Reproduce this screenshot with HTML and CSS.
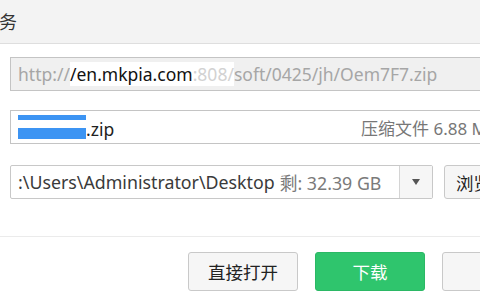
FILE: index.html
```html
<!DOCTYPE html>
<html>
<head>
<meta charset="utf-8">
<link rel="stylesheet" href="styles.css">
</head>
<body>
<div class="dialog">
  <div class="header"><span class="title">务</span></div>
  <div class="content">
    <div class="field url">
      <span class="dim">http://</span><span class="mask"><span class="strong">/en.mkpia.com</span><span class="faint">:808/</span></span><span class="dim">soft/0425/jh/Oem7F7.zip</span>
    </div>
    <div class="field name">
      <span class="namepart"><span class="sel"><span class="bar top"></span><span class="seltext">Oem7F7</span><span class="bar bottom"></span></span><span class="ext">.zip</span></span>
      <span class="meta">压缩文件 6.88 MB</span>
    </div>
    <div class="pathrow">
      <div class="combo">
        <div class="path"><span class="dir">:\Users\Administrator\Desktop</span> <span class="free">剩: 32.39 GB</span></div>
        <div class="drop"><span class="arrow"></span></div>
      </div>
      <div class="btn browse">浏览</div>
    </div>
  </div>
  <div class="footer">
    <div class="btn action">直接打开</div>
    <div class="btn action primary">下载</div>
    <div class="btn action last">取消</div>
  </div>
</div>
</body>
</html>
```
FILE: styles.css
```css
html, body {
  margin: 0;
  padding: 0;
  background: #ffffff;
  width: 480px;
  height: 300px;
  overflow: hidden;
  font-family: "Noto Sans", "Noto Sans CJK SC", sans-serif;
}
.dialog {
  width: 480px;
  height: 300px;
  overflow: hidden;
}
.header {
  height: 43px;
  background: #f3f3f3;
  border-bottom: 1px solid #dedede;
  display: flex;
  align-items: center;
}
.title {
  font-family: "Noto Sans CJK SC", sans-serif;
  font-size: 18px;
  color: #333;
  margin-left: -1px;
  margin-top: -2px;
}
.content {
  padding: 13px 0 0 10px;
  display: flex;
  flex-direction: column;
  gap: 19px;
}
.field {
  box-sizing: border-box;
  height: 34px;
  width: 560px;
  border: 1px solid #c4c4c4;
  display: flex;
  align-items: center;
  padding-left: 7px;
  font-size: 17.5px;
  white-space: nowrap;
}
.url {
  background: #f0f0f0;
}
.dim { color: #a6a6a6; }
.mask {
  background: #ffffff;
  height: 24px;
  display: flex;
  align-items: center;
}
.strong { color: #111; }
.faint { color: #d2d2d2; }
.name {
  background: #fff;
}
.namepart {
  display: flex;
  align-items: center;
  width: 343px;
  flex: none;
}
.sel {
  position: relative;
  display: inline-flex;
  width: 68px;
  height: 26px;
  overflow: hidden;
}
.seltext {
  position: absolute;
  left: 0;
  top: 2px;
  color: #fff;
  line-height: 26px;
}
.bar {
  position: absolute;
  left: 0;
  width: 68px;
  background: #3c94f3;
}
.bar.top { top: 1px; height: 5px; }
.bar.bottom { top: 14px; height: 11px; }
.ext {
  color: #222;
  margin-top: 3px;
}
.meta {
  color: #777;
  font-family: "Noto Sans", "Noto Sans CJK SC", sans-serif;
  font-size: 17px;
}
.pathrow {
  display: flex;
  gap: 11px;
  margin-top: 2px;
}
.combo {
  box-sizing: border-box;
  flex: none;
  width: 423px;
  height: 34px;
  border: 1px solid #c8c8c8;
  border-radius: 2px;
  display: flex;
}
.path {
  flex: 1;
  display: flex;
  align-items: center;
  padding-left: 7px;
  font-size: 17.8px;
  white-space: nowrap;
  overflow: hidden;
}
.dir { color: #3a3a3a; }
.free { color: #7a7a7a; margin-left: 5px; }
.drop {
  width: 32px;
  border-left: 1px solid #d4d4d4;
  background: #f6f6f6;
  display: flex;
  align-items: center;
  justify-content: center;
}
.arrow {
  width: 0;
  height: 0;
  border-left: 4px solid transparent;
  border-right: 4px solid transparent;
  border-top: 6px solid #555;
}
.btn {
  box-sizing: border-box;
  background: #f6f6f6;
  border: 1px solid #c9c9c9;
  border-radius: 3px;
  display: flex;
  align-items: center;
  justify-content: center;
  font-family: "Noto Sans CJK SC", sans-serif;
  font-size: 17.5px;
  color: #222;
  white-space: nowrap;
}
.browse {
  flex: none;
  width: 80px;
  height: 34px;
  justify-content: flex-start;
  padding-left: 11px;
}
.footer {
  margin-top: 37px;
  border-top: 1px solid #ebebeb;
  padding: 15px 0 0 188px;
  display: flex;
  gap: 17px;
}
.action {
  flex: none;
  width: 110px;
  height: 39px;
}
.last {
  width: 130px;
}
.primary {
  background: #2fc56d;
  border-color: #2bb865;
  color: #ffffff;
}
```
